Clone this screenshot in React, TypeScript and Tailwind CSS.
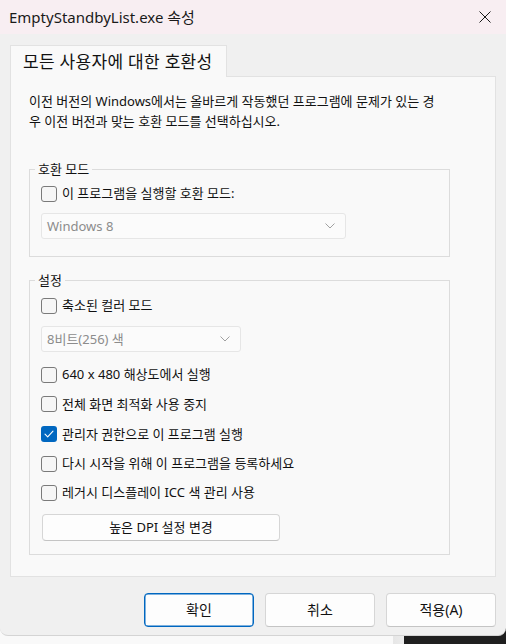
import type { ReactNode } from 'react'

const font = "font-['Noto_Sans','Noto_Sans_CJK_KR',sans-serif]"

function Checkbox({ checked }: { checked?: boolean }) {
  if (checked) {
    return (
      <span className="flex h-[16px] w-[16px] shrink-0 items-center justify-center rounded-[3px] bg-[#0067c0]">
        <svg width="10" height="8" viewBox="0 0 10 8" fill="none">
          <path d="M1 4.2 L3.7 6.8 L9 1.2" stroke="#ffffff" strokeWidth="1.1" strokeLinecap="round" strokeLinejoin="round" />
        </svg>
      </span>
    )
  }
  return <span className="h-[16px] w-[16px] shrink-0 rounded-[3px] border border-[#7a7a7a] bg-[#f6f6f6]" />
}

function CheckRow({ label, checked, h = 'h-[29px]' }: { label: string; checked?: boolean; h?: string }) {
  return (
    <div className={`flex items-center gap-[5px] ${h}`}>
      <Checkbox checked={checked} />
      <span className="whitespace-nowrap text-[13px] leading-none text-[#111111]">{label}</span>
    </div>
  )
}

function Dropdown({ value, w }: { value: string; w: string }) {
  return (
    <div className={`flex h-[26px] items-center justify-between rounded-[3px] border border-[#e6e6e6] bg-[#fbfbfb] pl-[5px] pr-[10px] ${w}`}>
      <span className="whitespace-nowrap text-[13px] leading-none text-[#8c8c8c]">{value}</span>
      <svg width="10" height="6" viewBox="0 0 10 6" fill="none">
        <path d="M0.5 0.5 L5 5 L9.5 0.5" stroke="#a0a0a0" strokeWidth="1" />
      </svg>
    </div>
  )
}

function Group({ title, children, className }: { title: string; children: ReactNode; className?: string }) {
  return (
    <fieldset className={`w-[421px] border border-[#dcdcdc] px-[11px] ${className ?? ''}`}>
      <legend className="-ml-[6px] px-[3px] text-[13px] leading-[20px] text-[#111111]">{title}</legend>
      {children}
    </fieldset>
  )
}

function Button({ children, primary, w = 'w-[110px]', h = 'h-[34px]' }: { children: ReactNode; primary?: boolean; w?: string; h?: string }) {
  return (
    <button
      className={`flex items-center justify-center rounded-[4px] bg-[#fdfdfd] text-[14px] leading-none text-[#111111] ${w} ${h} ${
        primary
          ? 'border border-[#0067c0] shadow-[inset_0_0_0_0.5px_#0067c0]'
          : 'border border-[#d6d6d6] border-b-[#c4c4c4]'
      }`}
    >
      {children}
    </button>
  )
}

export default function App() {
  return (
    <div className={`${font} flex h-[644px] w-[506px] flex-col overflow-hidden bg-[linear-gradient(to_right,#f9f9f9_393px,#e6e6e6_393px,#ececec_404px,#1f1f1f_404px)]`}>
      <div className="flex h-[636px] flex-col rounded-b-[8px] border-b border-[#d4d4d4] bg-[#f0f0f0]">
        {/* title bar */}
        <div className="flex h-[34px] shrink-0 items-center justify-between bg-[#f8eef2] pl-[9px] pr-[15px]">
          <span className="text-[15px] leading-none text-[#1a1a1a]">EmptyStandbyList.exe 속성</span>
          <svg width="12" height="12" viewBox="0 0 12 12" fill="none">
            <path d="M0.5 0.5 L11.5 11.5 M11.5 0.5 L0.5 11.5" stroke="#1a1a1a" strokeWidth="1" />
          </svg>
        </div>

        <div className="flex flex-col px-[10px] pt-[11px]">
          {/* tab */}
          <div className="relative z-10 -mb-px flex h-[32px] w-[217px] items-center border border-b-0 border-[#e2e2e2] bg-[#f9f9f9] pl-[12px]">
            <span className="whitespace-nowrap text-[17px] leading-none tracking-[0.3px] text-[#111111]">모든 사용자에 대한 호환성</span>
          </div>

          {/* panel */}
          <div className="flex h-[501px] w-[486px] flex-col border border-[#e2e2e2] bg-[#f9f9f9] pl-[18px] pt-[14px]">
            <p className="whitespace-nowrap text-[13px] leading-[20px] text-[#111111]">
              이전 버전의 Windows에서는 올바르게 작동했던 프로그램에 문제가 있는 경
              <br />
              우 이전 버전과 맞는 호환 모드를 선택하십시오.
            </p>

            <Group title="호환 모드" className="mt-[28px] pb-[17px]">
              <CheckRow label="이 프로그램을 실행할 호환 모드:" />
              <div className="mt-[5px]">
                <Dropdown value="Windows 8" w="w-[305px]" />
              </div>
            </Group>

            <Group title="설정" className="mt-[13px] pb-[13px] pt-[1px]">
              <CheckRow label="축소된 컬러 모드" />
              <div className="mt-[6px] mb-[8px]">
                <Dropdown value="8비트(256) 색" w="w-[200px]" />
              </div>
              <CheckRow label="640 x 480 해상도에서 실행" />
              <CheckRow label="전체 화면 최적화 사용 중지" h="h-[30px]" />
              <CheckRow label="관리자 권한으로 이 프로그램 실행" checked h="h-[30px]" />
              <CheckRow label="다시 시작을 위해 이 프로그램을 등록하세요" />
              <CheckRow label="레거시 디스플레이 ICC 색 관리 사용" />
              <div className="mt-[7px] pl-px">
                <Button w="w-[238px]" h="h-[27px]">
                  <span className="text-[13px]">높은 DPI 설정 변경</span>
                </Button>
              </div>
            </Group>
          </div>

          {/* footer buttons */}
          <div className="mt-[16px] flex gap-[11px] pl-[134px]">
            <Button primary>확인</Button>
            <Button>취소</Button>
            <Button>적용(A)</Button>
          </div>
        </div>
      </div>
    </div>
  )
}
